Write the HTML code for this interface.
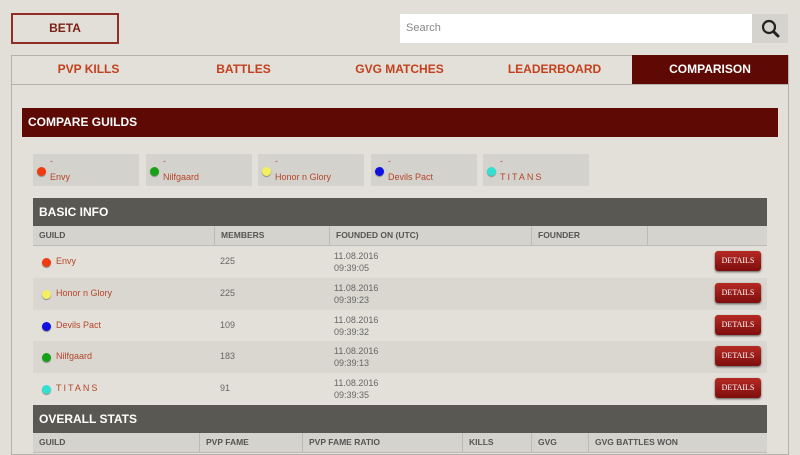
<!DOCTYPE html>
<html><head><meta charset="utf-8"><style>
*{box-sizing:border-box;margin:0;padding:0}
body{width:800px;height:446px;overflow:hidden;background:#e1dfd8;font-family:"Liberation Sans",sans-serif;position:relative}
.a{position:absolute}
.beta{left:11px;top:13px;width:108px;height:31px;border:2px solid #8e2e25;color:#7a2218;font-weight:bold;font-size:12px;text-align:center;line-height:27px}
.search{left:400px;top:14px;width:352px;height:29px;background:#fff;color:#888;font-size:11px;line-height:29px;padding-left:6px}
.sbtn{left:752px;top:14px;width:36px;height:29px;background:#d5d3cd}
.box{left:11px;top:55px;width:778px;height:400px;border:1px solid #b3b1aa;background:#e2e0d9}
.tabs{left:11px;top:55px;width:778px;height:30px;border-bottom:1px solid #b3b1aa}
.tab{position:absolute;top:0;height:29px;line-height:29px;font-weight:bold;font-size:12px;color:#c4401c;text-align:center}
.cg{left:22px;top:108px;width:756px;height:29px;background:#5e0903;color:#fff;font-weight:bold;font-size:12px;line-height:29px;padding-left:6px}
.chip{position:absolute;top:154px;width:106px;height:32px;background:#d4d2cc;font-size:9px;color:#b5452a}
.dot{position:absolute;width:9px;height:9px;border-radius:50%;box-shadow:0 1px 1px #888}
.hd{left:33px;width:734px;height:28px;background:#5a5853;color:#fff;font-weight:bold;font-size:12px;line-height:28px;padding-left:6px}
.ch{left:33px;width:734px;height:20px;background:#d5d3cd;border-bottom:1px solid #bcbab4;font-size:8.5px;font-weight:bold;color:#555}
.ch span{position:absolute;top:0;height:19px;line-height:19px;padding-left:6px;border-left:1px solid #bcbab4}
.row{left:33px;width:734px;height:32px;font-size:9px;color:#666}
.row.alt{background:#d9d7d0}
.row .n{position:absolute;left:23px;top:10px;color:#b5452a}
.row .m{position:absolute;left:187px;top:10px}
.row .d{position:absolute;left:301px;top:4px;line-height:12px}
.det{position:absolute;left:682px;top:5px;width:46px;height:20px;border-radius:3px;background:linear-gradient(#b52a24,#7e0e0c);color:#fff;font-family:"Liberation Serif",serif;font-size:8px;text-align:center;line-height:20px;box-shadow:0 1px 2px #555}
</style></head><body>
<div class="a beta">BETA</div>
<div class="a search">Search</div>
<div class="a sbtn"><svg width="36" height="29"><circle cx="17" cy="13" r="6" fill="none" stroke="#222" stroke-width="2.2"/><line x1="21.5" y1="17.5" x2="26" y2="22" stroke="#222" stroke-width="3" stroke-linecap="round"/></svg></div>
<div class="a box"></div>
<div class="a tabs">
<div class="tab" style="left:0;width:155px">PVP KILLS</div>
<div class="tab" style="left:155px;width:155px">BATTLES</div>
<div class="tab" style="left:311px;width:155px">GVG MATCHES</div>
<div class="tab" style="left:466px;width:155px">LEADERBOARD</div>
<div class="tab" style="left:621px;width:156px;background:#5e0903;color:#fff">COMPARISON</div>
</div>
<div class="a cg">COMPARE GUILDS</div>
<div class="chip" style="left:33px"><span class="a" style="left:17px;top:2px">-</span><div class="dot" style="left:4px;top:13px;background:#f03a10"></div><span class="a" style="left:17px;top:18px">Envy</span></div>
<div class="chip" style="left:146px"><span class="a" style="left:17px;top:2px">-</span><div class="dot" style="left:4px;top:13px;background:#17a117"></div><span class="a" style="left:17px;top:18px">Nilfgaard</span></div>
<div class="chip" style="left:258px"><span class="a" style="left:17px;top:2px">-</span><div class="dot" style="left:4px;top:13px;background:#f4f060"></div><span class="a" style="left:17px;top:18px">Honor n Glory</span></div>
<div class="chip" style="left:371px"><span class="a" style="left:17px;top:2px">-</span><div class="dot" style="left:4px;top:13px;background:#1010e0"></div><span class="a" style="left:17px;top:18px">Devils Pact</span></div>
<div class="chip" style="left:483px"><span class="a" style="left:17px;top:2px">-</span><div class="dot" style="left:4px;top:13px;background:#30e0d0"></div><span class="a" style="left:17px;top:18px;letter-spacing:2px">TITANS</span></div>
<div class="a hd" style="top:198px">BASIC INFO</div>
<div class="a ch" style="top:226px"><span style="left:0;border:0">GUILD</span><span style="left:181px">MEMBERS</span><span style="left:296px">FOUNDED ON (UTC)</span><span style="left:498px">FOUNDER</span><span style="left:614px"></span></div>
<div class="a row" style="top:246px"><div class="dot" style="left:9px;top:12px;background:#f03a10"></div><span class="n">Envy</span><span class="m">225</span><span class="d">11.08.2016<br>09:39:05</span><div class="det">DETAILS</div></div>
<div class="a row alt" style="top:278px"><div class="dot" style="left:9px;top:12px;background:#f4f060"></div><span class="n">Honor n Glory</span><span class="m">225</span><span class="d">11.08.2016<br>09:39:23</span><div class="det">DETAILS</div></div>
<div class="a row" style="top:310px"><div class="dot" style="left:9px;top:12px;background:#1010e0"></div><span class="n">Devils Pact</span><span class="m">109</span><span class="d">11.08.2016<br>09:39:32</span><div class="det">DETAILS</div></div>
<div class="a row alt" style="top:341px"><div class="dot" style="left:9px;top:12px;background:#17a117"></div><span class="n">Nilfgaard</span><span class="m">183</span><span class="d">11.08.2016<br>09:39:13</span><div class="det">DETAILS</div></div>
<div class="a row" style="top:373px"><div class="dot" style="left:9px;top:12px;background:#30e0d0"></div><span class="n" style="letter-spacing:2px">TITANS</span><span class="m">91</span><span class="d">11.08.2016<br>09:39:35</span><div class="det">DETAILS</div></div>
<div class="a hd" style="top:405px">OVERALL STATS</div>
<div class="a ch" style="top:433px"><span style="left:0;border:0">GUILD</span><span style="left:166px">PVP FAME</span><span style="left:269px">PVP FAME RATIO</span><span style="left:429px">KILLS</span><span style="left:498px">GVG</span><span style="left:555px">GVG BATTLES WON</span></div>
</body></html>
